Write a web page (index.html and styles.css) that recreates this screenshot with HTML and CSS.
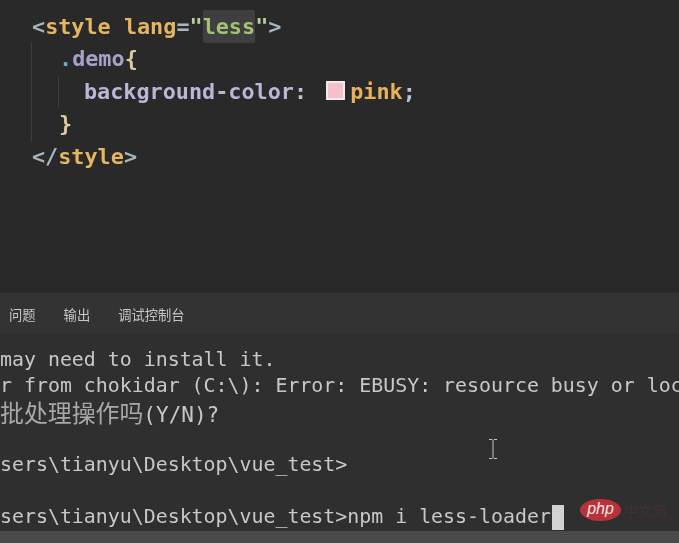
FILE: index.html
```html
<!DOCTYPE html>
<html lang="zh">
<head>
<meta charset="utf-8">
<title>less-loader</title>
<link rel="stylesheet" href="styles.css">
</head>
<body>
<div class="window">
  <section class="editor">
    <div class="line l0"><span class="punc">&lt;</span><span class="tag">style</span> <span class="tag">lang</span><span class="punc">=</span><span class="str">"</span><span class="hl">less</span><span class="str">"</span><span class="punc">&gt;</span></div>
    <div class="nest outer">
      <div class="line l1"><span class="dot">.</span><span class="sel">demo</span><span class="brace">{</span></div>
      <div class="nest inner">
        <div class="line l2"><span class="prop">background-color</span><span class="colon">:</span> <span class="swatch"></span><span class="val">pink</span><span class="colon">;</span></div>
      </div>
      <div class="line l1"><span class="brace">}</span></div>
    </div>
    <div class="line l0"><span class="punc">&lt;/</span><span class="tag">style</span><span class="punc">&gt;</span></div>
  </section>
  <nav class="tabs">
    <span class="tab">问题</span>
    <span class="tab">输出</span>
    <span class="tab">调试控制台</span>
  </nav>
  <section class="terminal">
    <div class="row">may need to install it.</div>
    <div class="row">r from chokidar (C:\): Error: EBUSY: resource busy or loc</div>
    <div class="row"><span class="cjk">批处理操作吗</span><span class="prompt">(Y/N)?</span></div>
    <div class="row"></div>
    <div class="row">sers\tianyu\Desktop\vue_test&gt;</div>
    <div class="row"></div>
    <div class="row">sers\tianyu\Desktop\vue_test&gt;npm i less-loader<span class="cursor"></span></div>
    <svg class="ibeam" width="10" height="20" viewBox="0 0 10 20" aria-hidden="true">
      <path d="M1 .5H4L5 1.5 6 .5H9M5 1.5V18.5M1 19.5H4L5 18.5 6 19.5H9" fill="none" stroke="#c4c4c4" stroke-width="1"/>
    </svg>
    <div class="mark">
      <span class="logo">php</span>
      <span class="logo-cn">中文网</span>
    </div>
  </section>
  <footer class="status"></footer>
</div>
</body>
</html>
```
FILE: styles.css
```css
* { box-sizing: border-box; }
html, body { margin: 0; padding: 0; }
body { width: 679px; height: 543px; overflow: hidden; background: #2a2a2a; }
.window { display: flex; flex-direction: column; width: 679px; height: 543px; overflow: hidden; }

.editor {
  height: 293px;
  padding: 11px 0 0 32px;
  background: #292929;
  font: 700 21.8px/32.4px "DejaVu Sans Mono", monospace;
  filter: blur(.4px);
}
.line { height: 32.4px; white-space: pre; }
.nest { border-left: 1px solid #3d3d3d; }
.outer { margin-left: -1px; }
.inner { margin-left: 26px; }
.l1 { padding-left: 27px; }
.l2 { padding-left: 25px; }
.punc { color: #a9b4bd; }
.tag { color: #e5b661; }
.str { color: #b6d0a0; }
.hl { color: #a3c274; background: #3f3f3f; border-radius: 2px; padding: 4px 0; }
.dot { color: #6ea6d8; }
.sel { color: #a9a2c8; }
.brace { color: #dccaa0; }
.prop { color: #b9b6d6; }
.colon { color: #b8c4d4; }
.val { color: #e8b25c; }
.swatch {
  display: inline-block;
  width: 19px;
  height: 19px;
  margin: 0 5px 0 6px;
  vertical-align: -1px;
  background: #f6c0cb;
  border: 2px solid #ececec;
}

.tabs {
  display: flex;
  align-items: center;
  gap: 28px;
  height: 40px;
  padding: 4px 0 0 9px;
  background: #333;
  color: #c6c6c6;
  font: 13.3px/1 "Noto Sans CJK SC", sans-serif;
  filter: blur(.3px);
}

.terminal {
  position: relative;
  flex: 1;
  padding-top: 14px;
  background: #2f2f2f;
  color: #c8c8c8;
  font: 400 19.9px/26.2px "DejaVu Sans Mono", "Noto Sans CJK SC", monospace;
  overflow: hidden;
}
.row { height: 26.2px; white-space: pre; filter: blur(.35px); }
.cjk { font: 400 23.9px/26px "Noto Sans CJK SC", sans-serif; color: #a8a8a8; }
.prompt { font-size: 21px; }
.cursor {
  display: inline-block;
  width: 12px;
  height: 25px;
  margin-left: 1px;
  vertical-align: -7px;
  background: #d2d2d2;
}
.ibeam { position: absolute; left: 488px; top: 106px; }
.mark { position: absolute; left: 580px; top: 166px; display: flex; align-items: center; gap: 3px; }
.logo {
  display: block;
  width: 41px;
  height: 22px;
  border-radius: 50%;
  background: #b8323a;
  color: #f4e4e4;
  font: italic 400 16px/20px "Liberation Sans", sans-serif;
  text-align: center;
}
.logo-cn { color: #43302f; font: 14px/1 "Noto Sans CJK SC", sans-serif; }

.status { height: 12px; background: #4a4a4a; }
```
